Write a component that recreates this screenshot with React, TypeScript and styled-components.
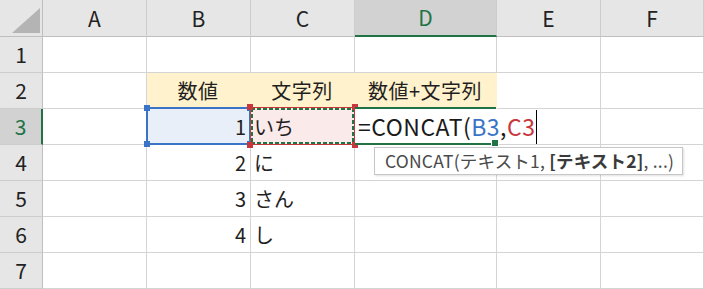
import React from 'react';
import styled, { createGlobalStyle, css } from 'styled-components';

const GREEN = '#217346';
const GRID = '#d4d4d4';
const HEAD_LINE = '#bfbfbf';
const BLUE = '#3b73c6';
const RED = '#c8373b';
const YELLOW = '#fff2cc';

const GlobalStyle = createGlobalStyle`
  html, body {
    margin: 0;
    padding: 0;
    background: #fff;
  }
  body {
    font-family: "Noto Sans CJK JP", "Noto Sans", sans-serif;
    color: #1f1f1f;
  }
`;

const Sheet = styled.div`
  display: grid;
  grid-template-columns: 43px 104px 104px 104px 142px 104px 1fr;
  grid-template-rows: 37px repeat(7, 36px);
  width: 704px;
  height: 289px;
  overflow: hidden;
`;

const Corner = styled.div`
  position: relative;
  background: #e6e6e6;
  border-right: 1px solid ${HEAD_LINE};
  border-bottom: 1px solid ${HEAD_LINE};

  &::after {
    content: '';
    position: absolute;
    right: 2px;
    bottom: 3px;
    width: 28px;
    height: 25px;
    background: #b4b4b4;
    clip-path: polygon(100% 0, 100% 100%, 0 100%);
  }
`;

const ColHeader = styled.div<{ $active?: boolean }>`
  display: flex;
  align-items: center;
  justify-content: center;
  background: #e6e6e6;
  border-right: 1px solid #cdcdcd;
  border-bottom: 1px solid ${HEAD_LINE};
  font-size: 21px;
  line-height: 1;
  color: #222;
  ${({ $active }) => $active && css`
    background: #d2d2d2;
    color: ${GREEN};
    border-bottom: 2px solid ${GREEN};
  `}
`;

const RowHeader = styled.div<{ $active?: boolean }>`
  display: flex;
  align-items: center;
  justify-content: center;
  background: #e6e6e6;
  border-right: 1px solid ${HEAD_LINE};
  border-bottom: 1px solid #cdcdcd;
  font-size: 21px;
  line-height: 1;
  color: #222;
  ${({ $active }) => $active && css`
    background: #d2d2d2;
    color: ${GREEN};
    border-right: 2px solid ${GREEN};
  `}
`;

type Align = 'left' | 'right' | 'center';

const justify: Record<Align, string> = {
  left: 'flex-start',
  right: 'flex-end',
  center: 'center',
};

const Cell = styled.div<{ $align?: Align; $fill?: string; $solid?: boolean; $raised?: boolean }>`
  display: flex;
  align-items: center;
  justify-content: ${({ $align = 'left' }) => justify[$align]};
  padding: 0 4px 0 3px;
  background: ${({ $fill }) => $fill || '#fff'};
  border-right: 1px solid ${({ $solid, $fill }) => ($solid && $fill ? $fill : GRID)};
  border-bottom: 1px solid ${({ $solid, $fill }) => ($solid && $fill ? $fill : GRID)};
  font-size: 20px;
  line-height: 1;
  white-space: nowrap;
  ${({ $raised }) => $raised && css`
    position: relative;
    z-index: 3;
    border-right-color: transparent;
  `}
`;

const Label = styled.span`
  letter-spacing: 0.5px;
`;

const Anchor = styled.div`
  position: relative;
  display: flex;
  align-items: center;
  width: 100%;
  height: 100%;
  justify-content: inherit;
`;

const RefBox = styled.div<{ $color: string }>`
  position: absolute;
  top: -2px;
  left: -4px;
  right: -5px;
  bottom: -1px;
  border: 2px solid ${({ $color }) => $color};
  pointer-events: none;
  z-index: 2;
`;

const dash = (dir: string) => `repeating-linear-gradient(${dir}, ${GREEN} 0 4px, transparent 4px 6px)`;

const CopyBox = styled.div`
  position: absolute;
  top: -2px;
  left: -4px;
  right: -5px;
  bottom: -1px;
  border: 1px solid ${RED};
  pointer-events: none;
  z-index: 2;

  &::before {
    content: '';
    position: absolute;
    inset: 0;
    background:
      ${dash('90deg')} top / 100% 2px no-repeat,
      ${dash('90deg')} bottom / 100% 2px no-repeat,
      ${dash('180deg')} left / 2px 100% no-repeat,
      ${dash('180deg')} right / 2px 100% no-repeat;
  }
`;

const ActiveBox = styled.div`
  position: absolute;
  top: -2px;
  left: -3px;
  right: -4px;
  bottom: -1px;
  border-top: 2px solid ${GREEN};
  border-bottom: 2px solid ${GREEN};
  pointer-events: none;
`;

type Corner = 'tl' | 'tr' | 'bl' | 'br';

const Handle = styled.span<{ $color: string; $at: Corner }>`
  position: absolute;
  width: 6px;
  height: 6px;
  background: ${({ $color }) => $color};
  ${({ $at }) => ($at[0] === 't' ? 'top: -4px;' : 'bottom: -4px;')}
  ${({ $at }) => ($at[1] === 'l' ? 'left: -4px;' : 'right: -4px;')}
`;

const FillHandle = styled.span`
  position: absolute;
  right: -3px;
  bottom: -4px;
  width: 6px;
  height: 6px;
  background: ${GREEN};
  border: 1px solid #fff;
`;

const Formula = styled.div`
  display: flex;
  align-items: center;
  font-size: 23px;
  line-height: 1;
  letter-spacing: 0.5px;
  color: #1a1a1a;
`;

const RefText = styled.span<{ $color: string }>`
  color: ${({ $color }) => $color};
`;

const Caret = styled.span`
  display: inline-block;
  width: 1px;
  height: 34px;
  margin-left: 1px;
  background: #000;
`;

const Tooltip = styled.div`
  position: absolute;
  left: 16px;
  top: 38px;
  width: 309px;
  height: 28px;
  box-sizing: border-box;
  display: flex;
  align-items: center;
  padding-left: 10px;
  background: #fff;
  border: 1px solid #c6c6c6;
  box-shadow: 1px 1px 2px rgba(0, 0, 0, 0.12);
  font-size: 17.5px;
  letter-spacing: 0.2px;
  color: #4a4a4a;
  white-space: nowrap;
  z-index: 5;

  b {
    font-weight: 700;
    color: #3a3a3a;
  }
`;

const columns = ['A', 'B', 'C', 'D', 'E', 'F'];

const values: { num: string; text: string }[] = [
  { num: '2', text: 'に' },
  { num: '3', text: 'さん' },
  { num: '4', text: 'し' },
];

const corners: Corner[] = ['tl', 'tr', 'bl', 'br'];

const App: React.FC = () => (
  <>
    <GlobalStyle />
    <Sheet>
      <Corner />
      {columns.map((c) => (
        <ColHeader key={c} $active={c === 'D'}>{c}</ColHeader>
      ))}

      {/* row 1 */}
      <RowHeader>1</RowHeader>
      {columns.map((c) => <Cell key={`1${c}`} />)}

      {/* row 2: header labels */}
      <RowHeader>2</RowHeader>
      <Cell />
      <Cell $align="center" $fill={YELLOW} $solid><Label>数値</Label></Cell>
      <Cell $align="center" $fill={YELLOW} $solid><Label>文字列</Label></Cell>
      <Cell $align="center" $fill={YELLOW} $solid><Label>数値+文字列</Label></Cell>
      <Cell />
      <Cell />

      {/* row 3: editing */}
      <RowHeader $active>3</RowHeader>
      <Cell />
      <Cell $align="right" $fill="#e9eff9">
        <Anchor>
          1
          <RefBox $color={BLUE}>
            {corners.map((k) => <Handle key={k} $at={k} $color={BLUE} />)}
          </RefBox>
        </Anchor>
      </Cell>
      <Cell $fill="#fbeaea">
        <Anchor>
          いち
          <CopyBox>
            {corners.map((k) => <Handle key={k} $at={k} $color={RED} />)}
          </CopyBox>
        </Anchor>
      </Cell>
      <Cell $raised>
        <Anchor>
          <ActiveBox>
            <FillHandle />
          </ActiveBox>
          <Formula>
            =CONCAT(
            <RefText $color={BLUE}>B3</RefText>
            ,
            <RefText $color={RED}>C3</RefText>
            <Caret />
          </Formula>
          <Tooltip>
            CONCAT(テキスト1,&nbsp;<b>[テキスト2]</b>, ...)
          </Tooltip>
        </Anchor>
      </Cell>
      <Cell />
      <Cell />

      {values.map((v, i) => (
        <React.Fragment key={v.num}>
          <RowHeader>{i + 4}</RowHeader>
          <Cell />
          <Cell $align="right">{v.num}</Cell>
          <Cell>{v.text}</Cell>
          <Cell />
          <Cell />
          <Cell />
        </React.Fragment>
      ))}

      <RowHeader>7</RowHeader>
      {columns.map((c) => <Cell key={`7${c}`} />)}
    </Sheet>
  </>
);

export default App;
